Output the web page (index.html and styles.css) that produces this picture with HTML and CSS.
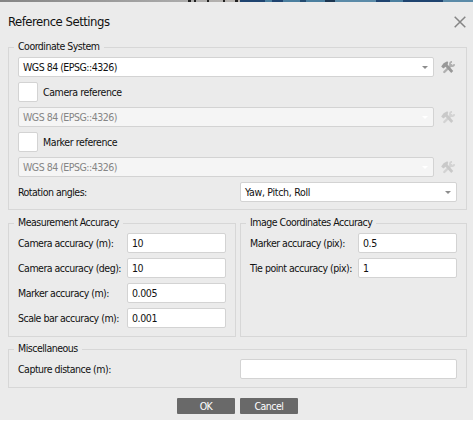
FILE: index.html
```html
<!DOCTYPE html>
<html lang="en">
<head>
  <meta charset="UTF-8" />
  <meta name="viewport" content="width=device-width, initial-scale=1" />
  <title>Reference Settings</title>
  <link rel="stylesheet" href="styles.css">
</head>
<body>
  <svg width="0" height="0" class="defs">
    <symbol id="tools" viewBox="0 0 14 13">
      <path d="M3.3 11 L10.3 4.2" stroke="#b0b0b0" stroke-width="2.4" stroke-linecap="round"/>
      <path d="M11 0.8 A2.2 2.2 0 1 0 13.3 3.2" fill="none" stroke="#b0b0b0" stroke-width="1.8"/>
      <path d="M0.2 5.4 L2.6 2.2 L6.3 0.3 L7.2 1.5 L6.6 3.4 L12.2 10 L10.2 12 L4.6 5.8 L2.4 7.4 Z" fill="#989898"/>
    </symbol>
  </svg>
  <div class="backdrop"></div>
  <div class="dialog">
    <div class="title-bar">
      <h1>Reference Settings</h1>
      <button class="close" aria-label="Close">
        <svg width="12" height="12" viewBox="0 0 12 12"><path d="M0.7 0.7 L11.3 11.3 M11.3 0.7 L0.7 11.3" stroke="#858585" stroke-width="1.5"/></svg>
      </button>
    </div>

    <fieldset class="group coordinate">
      <legend>Coordinate System</legend>
      <div class="row">
        <div class="select">WGS 84 (EPSG::4326)</div>
        <svg class="tools"><use href="#tools"/></svg>
      </div>
      <label class="row check"><span class="box"></span>Camera reference</label>
      <div class="row disabled">
        <div class="select">WGS 84 (EPSG::4326)</div>
        <svg class="tools"><use href="#tools"/></svg>
      </div>
      <label class="row check"><span class="box"></span>Marker reference</label>
      <div class="row disabled">
        <div class="select">WGS 84 (EPSG::4326)</div>
        <svg class="tools"><use href="#tools"/></svg>
      </div>
      <div class="row rotation">
        <label>Rotation angles:</label>
        <div class="select">Yaw, Pitch, Roll</div>
      </div>
    </fieldset>

    <div class="columns">
      <fieldset class="group measurement">
        <legend>Measurement Accuracy</legend>
        <div class="row"><label>Camera accuracy (m):</label><div class="field">10</div></div>
        <div class="row"><label>Camera accuracy (deg):</label><div class="field">10</div></div>
        <div class="row"><label>Marker accuracy (m):</label><div class="field">0.005</div></div>
        <div class="row"><label>Scale bar accuracy (m):</label><div class="field">0.001</div></div>
      </fieldset>
      <fieldset class="group image">
        <legend>Image Coordinates Accuracy</legend>
        <div class="row"><label>Marker accuracy (pix):</label><div class="field">0.5</div></div>
        <div class="row"><label>Tie point accuracy (pix):</label><div class="field">1</div></div>
      </fieldset>
    </div>

    <fieldset class="group misc">
      <legend>Miscellaneous</legend>
      <div class="row"><label>Capture distance (m):</label><div class="field"></div></div>
    </fieldset>

    <div class="buttons">
      <button>OK</button>
      <button>Cancel</button>
    </div>
  </div>
</body>
</html>
```

FILE: styles.css
```css
* {
  margin: 0;
  padding: 0;
  box-sizing: border-box;
}

body {
  font-family: Tahoma, "DejaVu Sans Condensed", "DejaVu Sans", sans-serif;
  font-stretch: condensed;
  font-size: 10.5px;
  letter-spacing: -0.5px;
  color: #111;
  background: #fff;
  overflow: hidden;
}

.defs {
  display: block;
}

/* sliver of the window behind the dialog */
.backdrop {
  width: 473px;
  height: 2px;
  background:
    linear-gradient(90deg, transparent 188px, #222 188px 191px, transparent 191px 194px, #222 194px 196px, transparent 196px 207px, #222 207px 209px, transparent 209px 223px, #222 223px 225px, transparent 225px 235px, #222 235px 238px, transparent 238px),
    linear-gradient(90deg, #858585 0, #aaa 180px, #b8b4b0 240px, #1f4470 240px 265px, #4b7f9f 265px 272px, #1f4470 272px 283px, #4b7f9f 283px 300px, #234b70 300px 306px, #4b7f9f 306px 325px, #1b3550 325px 335px, #5b8ba8 335px 376px, #1f4470 376px 390px, #4b7f9f 390px 403px, #1f4470 403px 443px, #5b8ba8 443px);
}

.dialog {
  width: 473px;
  height: 418px;
  padding: 0 6px 0 8px;
  background: #ebebeb;
}

.title-bar {
  display: flex;
  justify-content: space-between;
  height: 45px;
  padding: 12px 1px 0 0;
}

.title-bar h1 {
  font-size: 13px;
  line-height: 16px;
  font-weight: normal;
  letter-spacing: -0.5px;
}

.close {
  width: 12px;
  height: 12px;
  margin-top: 2px;
  border: none;
  background: none;
}

.close svg {
  display: block;
}

.group {
  position: relative;
  width: 459px;
  border: 1px solid #d7d7d7;
}

.group legend {
  position: absolute;
  top: -10px;
  left: 5px;
  padding: 0 4px;
  line-height: 16px;
  white-space: nowrap;
  background: #ebebeb;
}

.row {
  display: flex;
  align-items: center;
  height: 20px;
  margin-bottom: 5px;
  white-space: nowrap;
}

.check {
  letter-spacing: -0.4px;
}

.select,
.field,
.box {
  height: 20px;
  border: 1px solid #d3d3d3;
  border-radius: 2px;
  background: #fff;
}

.select,
.field {
  padding-left: 4px;
  line-height: 19px;
}

.select {
  display: flex;
  justify-content: space-between;
  align-items: center;
  width: 416px;
  padding-right: 5px;
}

.select::after {
  content: "";
  border: 3px solid transparent;
  border-top: 3px solid #8d8d8d;
  border-bottom: 0;
}

.tools {
  width: 14px;
  height: 13px;
  margin-left: 7px;
}

.disabled .select {
  color: #858585;
  background: #f5f5f5;
}

.disabled .select::after {
  border-top-color: #fff;
}

.disabled .tools {
  opacity: 0.4;
}

.box {
  width: 20px;
  margin-right: 5px;
}

.coordinate {
  height: 163px;
  padding: 9px 9px 0;
}

.rotation {
  justify-content: space-between;
}

.rotation .select {
  width: 217px;
  letter-spacing: -0.3px;
}

.columns {
  display: flex;
  gap: 4px;
  margin-top: 13px;
}

.columns .group {
  height: 114px;
  padding: 9px 9px 0;
}

.columns .row {
  justify-content: space-between;
}

.columns .measurement {
  width: 228px;
}

.columns .image {
  width: 227px;
}

.columns .field {
  width: 99px;
  letter-spacing: -0.4px;
}

.misc {
  height: 39px;
  margin-top: 12px;
  padding: 9px 9px 0;
}

.misc .row {
  justify-content: space-between;
}

.misc .field {
  width: 217px;
}

.buttons {
  display: flex;
  gap: 5px;
  padding: 10px 0 0 169px;
}

.buttons button {
  width: 58px;
  height: 16px;
  border: none;
  border-radius: 1px;
  background: #696969;
  color: #fff;
  font: inherit;
  letter-spacing: inherit;
}
```
